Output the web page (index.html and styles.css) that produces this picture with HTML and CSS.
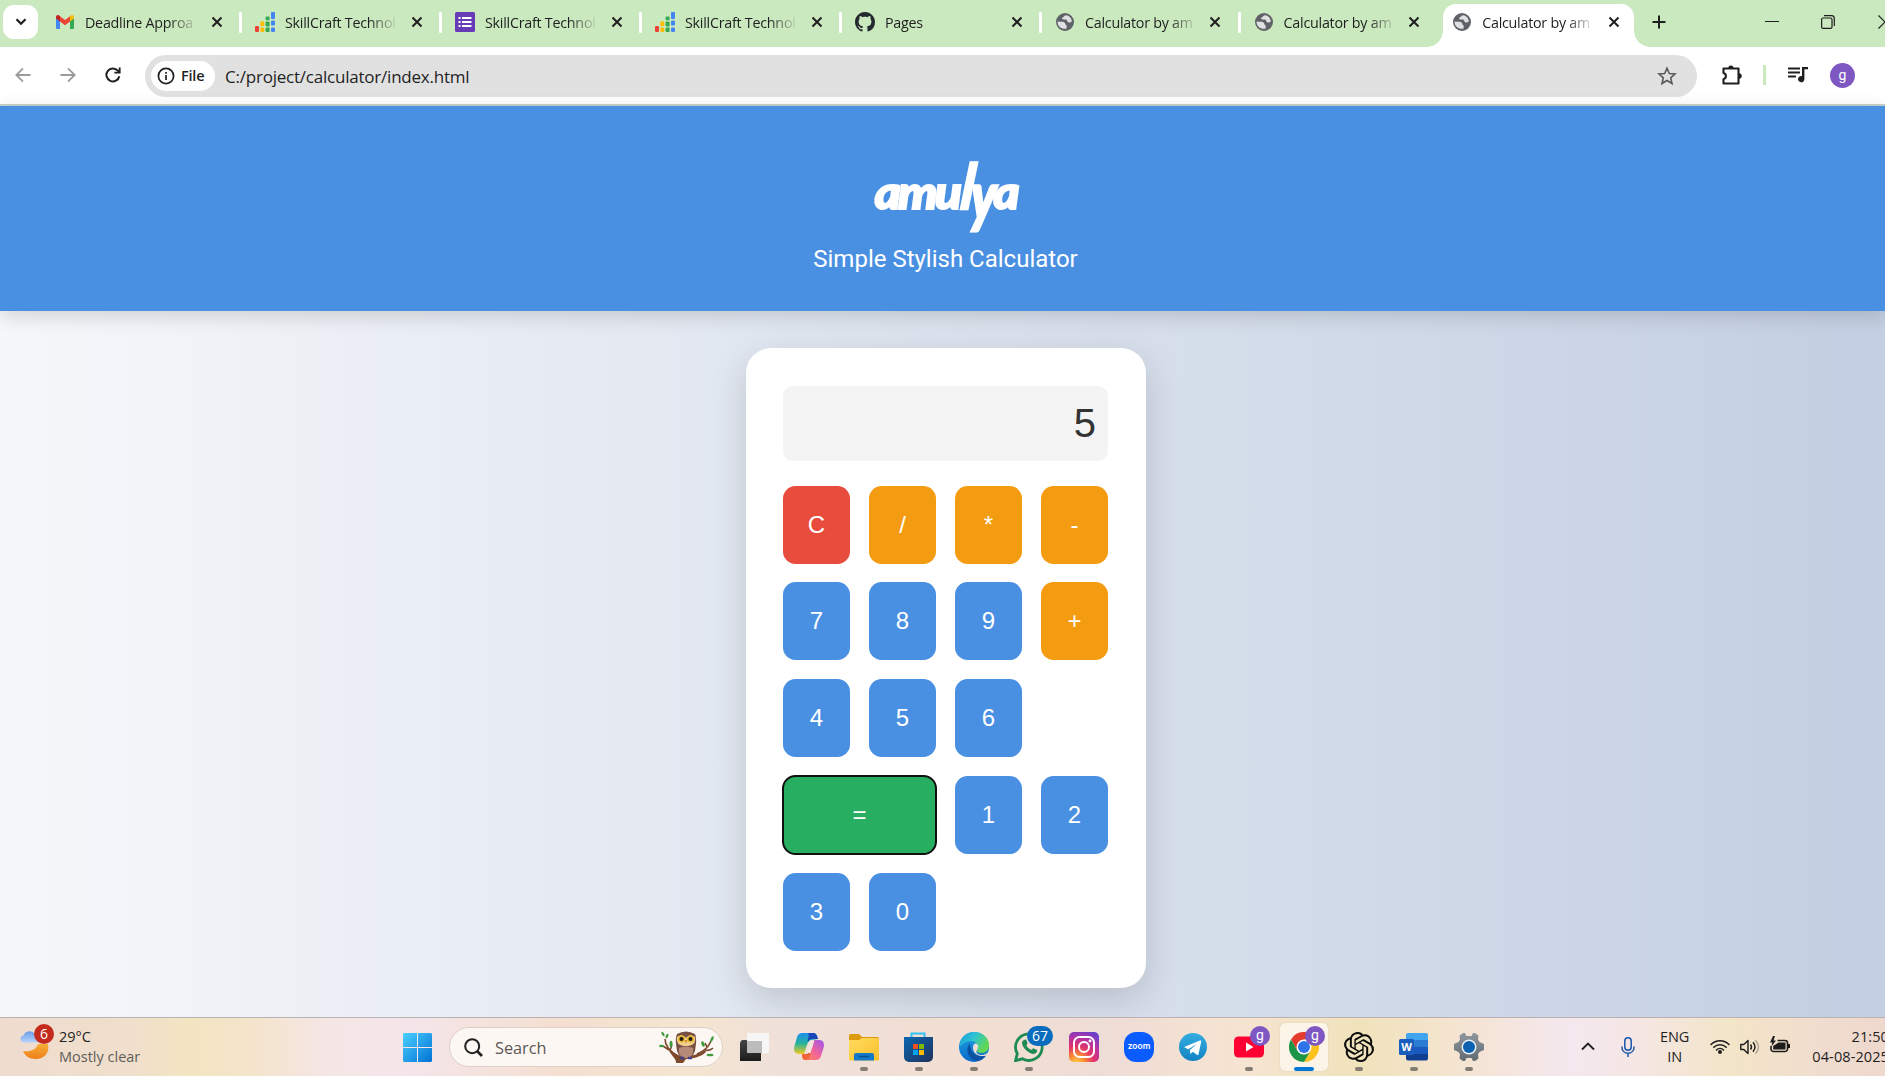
FILE: index.html
```html
<!DOCTYPE html>
<html lang="en">
<head>
<meta charset="utf-8">
<title>Calculator by amulya</title>
<link rel="stylesheet" href="styles.css">
</head>
<body>
<svg class="defs" aria-hidden="true">
  <defs>
    <linearGradient id="moon" x1="0" y1="0" x2="0" y2="1"><stop offset="0" stop-color="#f8ae38"/><stop offset="1" stop-color="#ee7f1a"/></linearGradient>
    <linearGradient id="cloud" x1="0" y1="0" x2="0" y2="1"><stop offset="0" stop-color="#6d9de8"/><stop offset="1" stop-color="#b5d3fa"/></linearGradient>
    <linearGradient id="win" x1="0" y1="0" x2="1" y2="1"><stop offset="0" stop-color="#4bd0ff"/><stop offset="1" stop-color="#0072d4"/></linearGradient>
    <linearGradient id="dark" x1="0" y1="0" x2="0" y2="1"><stop offset="0" stop-color="#444"/><stop offset="1" stop-color="#1c1c1c"/></linearGradient>
    <linearGradient id="copA" x1="0" y1="0" x2="0" y2="1"><stop offset="0" stop-color="#1b8df0"/><stop offset=".5" stop-color="#26b39a"/><stop offset="1" stop-color="#f2c81e"/></linearGradient>
    <linearGradient id="copB" x1="1" y1="0" x2="0" y2="1"><stop offset="0" stop-color="#9a56ee"/><stop offset=".5" stop-color="#f0649a"/><stop offset="1" stop-color="#ff8f4e"/></linearGradient>
    <linearGradient id="folder" x1="0" y1="0" x2="1" y2="1"><stop offset="0" stop-color="#ffdc5e"/><stop offset="1" stop-color="#fbbf2c"/></linearGradient>
    <linearGradient id="store" x1="0" y1="0" x2="1" y2="1"><stop offset="0" stop-color="#0a67b0"/><stop offset="1" stop-color="#20315c"/></linearGradient>
    <linearGradient id="edgeA" x1="0" y1="0" x2="1" y2=".5"><stop offset="0" stop-color="#1a9be0"/><stop offset=".5" stop-color="#2fc4d0"/><stop offset="1" stop-color="#62d84e"/></linearGradient>
    <linearGradient id="edgeB" x1="0" y1="0" x2="0" y2="1"><stop offset="0" stop-color="#1da5e6"/><stop offset="1" stop-color="#0a68c8"/></linearGradient>
    <radialGradient id="insta" cx=".25" cy="1.05" r="1.15"><stop offset="0" stop-color="#ffd24a"/><stop offset=".25" stop-color="#fb8a34"/><stop offset=".5" stop-color="#e2336b"/><stop offset=".75" stop-color="#b632a4"/><stop offset="1" stop-color="#6a3fc9"/></radialGradient>
    <linearGradient id="tele" x1="0" y1="0" x2="0" y2="1"><stop offset="0" stop-color="#34ade1"/><stop offset="1" stop-color="#1383c3"/></linearGradient>
    <linearGradient id="gear" x1="0" y1="0" x2="0" y2="1"><stop offset="0" stop-color="#8f979e"/><stop offset="1" stop-color="#626a72"/></linearGradient>
  </defs>
  <symbol id="i-close" viewBox="0 0 12 12"><path d="M1.5 1.5l9 9M10.5 1.5l-9 9" fill="none" stroke="#1f1f1f" stroke-width="2"/></symbol>
  <symbol id="i-gmail" viewBox="0 0 20 20"><path d="M1 5v11a1 1 0 0 0 1 1h3V8z" fill="#4285f4"/><path d="M19 5v11a1 1 0 0 1-1 1h-3V8z" fill="#34a853"/><path d="M15 4.2V9.5l4-3V5c0-2-2-2.6-3.200-1.500z" fill="#fbbc04"/><path d="M5 4.200l5 3.800 5-3.800v5.300l-5 3.700-5-3.700z" fill="#ea4335"/><path d="M1 5v1.500l4 3V4.200l-.8-.7C3 2.500 1 3.200 1 5z" fill="#c5221f"/></symbol>
  <symbol id="i-bars" viewBox="0 0 20 20"><rect x="0" y="14" width="4" height="6" rx="1" fill="#ea4335"/><g fill="#fbbc04"><rect x="5.300" y="9.500" width="4" height="4.500" rx="1"/><rect x="5.300" y="15.500" width="4" height="4.500" rx="1"/></g><g fill="#34a853"><rect x="10.600" y="4.500" width="4" height="3.800" rx="1"/><rect x="10.600" y="9.500" width="4" height="5" rx="1"/><rect x="10.600" y="15.500" width="4" height="4.500" rx="1"/></g><g fill="#4285f4"><rect x="16" y="0" width="4" height="7" rx="1"/><rect x="16" y="8.500" width="4" height="5" rx="1"/><rect x="16" y="15.500" width="4" height="4.500" rx="1"/></g></symbol>
  <symbol id="i-forms" viewBox="0 0 20 20"><rect width="20" height="20" rx="1.500" fill="#673ab7"/><path d="M3.500 6h2M3.500 10h2M3.500 14h2M7 6h9.500M7 10h9.500M7 14h9.500" stroke="#fff" stroke-width="2"/></symbol>
  <symbol id="i-github" viewBox="0 0 16 16"><path fill="#24292f" d="M8 0C3.580 0 0 3.580 0 8c0 3.540 2.290 6.530 5.470 7.590.4.070.55-.17.55-.38 0-.19-.01-.82-.01-1.490-2.010.37-2.530-.49-2.690-.94-.09-.23-.48-.94-.82-1.130-.28-.15-.68-.52-.01-.53.63-.01 1.080.58 1.230.82.72 1.210 1.870.87 2.330.66.070-.52.28-.87.51-1.070-1.780-.2-3.640-.89-3.640-3.950 0-.87.31-1.590.82-2.150-.08-.2-.36-1.020.08-2.120 0 0 .67-.21 2.200.82.64-.18 1.320-.27 2-.27s1.360.09 2 .27c1.530-1.040 2.200-.82 2.200-.82.44 1.100.16 1.920.08 2.120.51.56.82 1.270.82 2.150 0 3.070-1.870 3.750-3.650 3.950.29.25.54.73.54 1.480 0 1.070-.01 1.930-.01 2.200 0 .21.15.46.55.38A8.010 8.010 0 0 0 16 8c0-4.420-3.580-8-8-8z"/></symbol>
  <symbol id="i-globe" viewBox="0 0 20 20"><circle cx="10" cy="10" r="9" fill="#5f6368"/><path d="M2.600 9.500c1.500.2 3 .2 4.800.2 1.900 0 2.800 1 2.900 2.300.1 1 1.300.8 1.400 2l-.2 2.800C6 17.300 2.400 14.200 2.600 9.500zM10.800 3.300c-1.700.3-1.800 1.700-3 2.100-1 .3-1 1.500.1 1.900 1.600.5 2.200-.4 3.600.5 1.200.8.5 2.100 1.700 2.500 1.400.6 2.700.1 3.600-.8C16.500 6 14.300 3.600 10.800 3.300z" fill="#fff" opacity=".8"/></symbol>
</svg>

<div class="tabstrip">
  <button class="tab-search"><svg width="12" height="8" viewBox="0 0 12 8"><path d="M1.500 1.200L6 5.800l4.500-4.600" fill="none" stroke="#1f1f1f" stroke-width="2.200"/></svg></button>
  <div class="tab"><svg class="fav"><use href="#i-gmail"/></svg><span class="title">Deadline Approa</span><svg class="x"><use href="#i-close"/></svg></div>
  <div class="tab"><svg class="fav"><use href="#i-bars"/></svg><span class="title">SkillCraft Technol</span><svg class="x"><use href="#i-close"/></svg></div>
  <div class="tab"><svg class="fav"><use href="#i-forms"/></svg><span class="title">SkillCraft Technol</span><svg class="x"><use href="#i-close"/></svg></div>
  <div class="tab"><svg class="fav"><use href="#i-bars"/></svg><span class="title">SkillCraft Technol</span><svg class="x"><use href="#i-close"/></svg></div>
  <div class="tab"><svg class="fav"><use href="#i-github"/></svg><span class="title">Pages</span><svg class="x"><use href="#i-close"/></svg></div>
  <div class="tab narrow"><svg class="fav"><use href="#i-globe"/></svg><span class="title">Calculator by am</span><svg class="x"><use href="#i-close"/></svg></div>
  <div class="tab narrow last"><svg class="fav"><use href="#i-globe"/></svg><span class="title">Calculator by am</span><svg class="x"><use href="#i-close"/></svg></div>
  <div class="tab active"><svg class="fav"><use href="#i-globe"/></svg><span class="title">Calculator by am</span><svg class="x"><use href="#i-close"/></svg></div>
  <svg class="new-tab" width="14" height="14" viewBox="0 0 14 14"><path d="M7 .5v13M.5 7h13" stroke="#1f1f1f" stroke-width="2"/></svg>
  <div class="window-controls">
    <svg width="14" height="14" viewBox="0 0 14 14"><path d="M0 6.500h14" stroke="#1f1f1f"/></svg>
    <svg width="14" height="14" viewBox="0 0 14 14" fill="none" stroke="#1f1f1f" stroke-width="1.200"><rect x=".6" y="3" width="10.400" height="10.400" rx="1.500"/><path d="M3 .7h7.500a2.800 2.800 0 0 1 2.800 2.800V11"/></svg>
    <svg width="14" height="14" viewBox="0 0 14 14"><path d="M.5 .5l13 13M13.500 .5l-13 13" stroke="#1f1f1f" stroke-width="1.200"/></svg>
  </div>
</div>

<div class="toolbar">
  <div class="nav">
    <svg width="16" height="16" viewBox="0 0 16 16" fill="none" stroke="#9b9b9b" stroke-width="1.800"><path d="M15.500 8H1.500M8 1.300L1.300 8 8 14.700"/></svg>
    <svg width="16" height="16" viewBox="0 0 16 16" fill="none" stroke="#9b9b9b" stroke-width="1.800"><path d="M.5 8h14M8 1.300L14.700 8 8 14.700"/></svg>
    <svg width="16" height="16" viewBox="0 0 16 16"><path d="M14.300 9.200A6.500 6.500 0 1 1 12.800 3.600L14.500 5.300" fill="none" stroke="#1f1f1f" stroke-width="2"/><path d="M15.600.4v6.100H9.400V4.700h4.300V.4z" fill="#1f1f1f"/></svg>
  </div>
  <div class="omnibox">
    <div class="chip"><svg width="18" height="18" viewBox="0 0 18 18"><circle cx="9" cy="9" r="7.600" fill="none" stroke="#1f1f1f" stroke-width="1.700"/><path d="M9 8v5M9 5v1.700" stroke="#1f1f1f" stroke-width="1.700"/></svg><span>File</span></div>
    <span class="url">C:/project/calculator/index.html</span>
    <svg class="star" width="20" height="20" viewBox="0 0 20 20"><path d="M10 2.200l2.300 5.300 5.700.5-4.300 3.800 1.300 5.700-5-3-5 3 1.300-5.700L2 8l5.700-.5z" fill="none" stroke="#5a5a5a" stroke-width="1.600"/></svg>
  </div>
  <svg class="puzzle" width="22" height="22" viewBox="0 0 22 22"><path d="M2.500 4.500h15v15h-15v-4.300a3.200 3.200 0 0 0 0-6.200z" fill="none" stroke="#1f1f1f" stroke-width="2.100" stroke-linejoin="round"/><path d="M7.300 4a2.600 2.600 0 0 1 5.200 0zM18 9.300a2.700 2.700 0 0 1 0 5.400z" fill="#1f1f1f"/></svg>
  <span class="bar-sep"></span>
  <svg class="music" width="20" height="16" viewBox="0 0 20 16"><path d="M0 1.500h12M0 5.500h12M0 9.500h8" stroke="#1f1f1f" stroke-width="2"/><path d="M14 0h6v2.300h-3.600V12a3.200 3.200 0 1 1-2.400-3z" fill="#1f1f1f"/></svg>
  <span class="avatar">g</span>
</div>

<main class="page">
  <header class="hero">
    <h1 class="brand">amu<span class="tall">l</span><span class="tail">y</span>a</h1>
    <p class="tagline">Simple Stylish Calculator</p>
  </header>
  <section class="calculator">
    <div class="display">5</div>
    <div class="keys">
      <button class="key clear">C</button><button class="key op">/</button><button class="key op">*</button><button class="key op">-</button>
      <button class="key">7</button><button class="key">8</button><button class="key">9</button><button class="key op">+</button>
      <button class="key">4</button><button class="key">5</button><button class="key">6</button>
      <button class="key equals">=</button><button class="key">1</button><button class="key">2</button>
      <button class="key">3</button><button class="key">0</button>
    </div>
  </section>
</main>

<footer class="taskbar">
  <div class="weather">
    <span class="weather-icon"><svg width="32" height="32" viewBox="0 0 32 32"><path d="M4 11.500a3.600 3.600 0 0 1 .5-7A6.500 6.500 0 0 1 16 3c5 0 6 8.500 1 8.500z" fill="url(#cloud)"/><path d="M4 20c7 1 13-1 15-7h10c2 9-4 15-12.500 15-6 0-10.500-3-12.500-8z" fill="url(#moon)"/></svg><span class="badge red">6</span></span>
    <span class="weather-text"><span>29°C</span><span class="muted">Mostly clear</span></span>
  </div>
  <div class="center">
    <svg class="start" width="29" height="29" viewBox="0 0 29 29"><path d="M1 0h13v14H0V1zM15 0h13l1 1v13H15zM0 15h14v14H1l-1-1zM15 15h14v13l-1 1H15z" fill="url(#win)"/></svg>
    <div class="search">
      <svg width="19" height="19" viewBox="0 0 19 19" fill="none" stroke="#202020" stroke-width="2"><circle cx="8.200" cy="8.200" r="7"/><path d="M13 13l5 5" stroke-width="2.600"/></svg>
      <span>Search</span>
      <svg class="owl" width="56" height="34" viewBox="0 0 56 34"><path d="M6 9c0 8 6 13 13 17M52 11c-2 5-6 10-14 13M46 20c4 1 6 0 8-2M11 20c2-3 2-5 1-8M48 17l-2-4M10 20l-6-4" fill="none" stroke="#7d4a2d" stroke-width="1.600"/><path d="M9 18c4 4 8 7 14 8 9 0 16-1 23-6l1 2c-5 5-13 6.500-20 7l-3 4h-7c1-4-6-8-8-15z" fill="#7d4a2d"/><g fill="#3f9b3c"><ellipse cx="4" cy="4" rx="1.200" ry="2.500" transform="rotate(-30 4 4)"/><ellipse cx="12" cy="14" rx="1.500" ry="3.200"/><ellipse cx="2.500" cy="16" rx="2.500" ry="1.300"/><ellipse cx="8" cy="6" rx="1.200" ry="2.500" transform="rotate(25 8 6)"/><ellipse cx="44" cy="14" rx="1.500" ry="3" transform="rotate(-25 44 14)"/><ellipse cx="53" cy="9" rx="1.300" ry="3" transform="rotate(25 53 9)"/><ellipse cx="51" cy="25" rx="3.500" ry="1.300"/></g><path d="M18 4q9-5 18 0c2 5 1 10 0 17q-3 8-9 8t-9-8c-1-7-2-12 0-17z" fill="#77503f"/><path d="M18 7c4-3 7-2 9 1 2-3 5-4 9-1 1 7-3 9-9 9s-10-2-9-9z" fill="#f0cf91"/><circle cx="22.500" cy="9" r="3.500" fill="#e8b72c"/><circle cx="31.500" cy="9" r="3.500" fill="#e8b72c"/><circle cx="22.500" cy="9" r="2" fill="#201a18"/><circle cx="31.500" cy="9" r="2" fill="#201a18"/><path d="M25.800 10h2.400L27 14z" fill="#d08a1d"/><path d="M20 18q7-3 14 0c1 6-2 10-7 10s-8-4-7-10z" fill="#b58b77"/><path d="M21 28h4M29 28h4" stroke="#42418b" stroke-width="2.500"/></svg>
    </div>
    <div class="apps">
      <span class="app"><svg viewBox="0 0 30 30"><path d="M8 8h14v21H1V12c0-2 1-4 3-4z" fill="url(#dark)"/><rect x="8" y="1" width="22" height="20" rx="1" fill="#f6f6f6"/><path d="M8 9h15v12H8z" fill="#bcbcbc"/></svg></span>
      <span class="app"><svg viewBox="0 0 30 30"><path d="M8 1h11c3 0 4 2 5 6l-6 1c-3 0-4 2-5 5l-3 9H5c-4 0-6-3-4.500-8L3 5c1-3 3-4 5-4z" fill="url(#copA)"/><path d="M14 1h5c3 0 4 2 5 6h-6c-2 0-3 1-4 3-1-4 2-5 0-9z" fill="#1b48b8"/><path d="M22 28H12c-3 0-4-2-4-6h4c3 0 4-2 5-5l3-9h5c4 0 6 3 4.500 8L27 24c-1 3-3 4-5 4z" fill="url(#copB)"/><path d="M8 22h4c2 0 4-2 5-4-1 5-1 10-5 10-3 0-4-2-4-6z" fill="#f2663d"/><path d="M17 8.500h3.500l-4 12.500H12.500z" fill="#f3e4df"/></svg></span>
      <span class="app run"><svg viewBox="0 0 30 30"><path d="M0 8V4c0-1.500 1-2 2-2h8l3 3h15c1 0 2 .8 2 2v4z" fill="#dc9a0c"/><path d="M0 8h10l3-2h15a2 2 0 0 1 2 2v20.500H0z" fill="url(#folder)"/><path d="M5 28.500V23a2 2 0 0 1 2-2h16a2 2 0 0 1 2 2v5.500z" fill="#1279c9"/><path d="M10 24.500h10" stroke="#0a4f8d" stroke-width="1.500"/></svg></span>
      <span class="app run store"><svg viewBox="0 0 30 30"><path d="M8.500 7V1.500h13V7" fill="none" stroke="#2fc0f4" stroke-width="2"/><path d="M1 5h29v20a5 5 0 0 1-5 5H6a5 5 0 0 1-5-5z" fill="url(#store)"/><path d="M10 12h5v5h-5z" fill="#f25022"/><path d="M16 12h5v5h-5z" fill="#7fba00"/><path d="M10 18h5v5h-5z" fill="#00a4ef"/><path d="M16 18h5v5h-5z" fill="#ffb900"/></svg></span>
      <span class="app run"><svg viewBox="0 0 30 30"><circle cx="15" cy="15" r="15" fill="url(#edgeB)"/><path d="M1 11C3 4 9 0 15 0c9 0 15 6 15 13 0 5-3 8-7 8-3 0-6-1-5-3 3-5-1-9-6-9-5 0-9 3-11 6z" fill="url(#edgeA)"/><path d="M11 11c-4 4-4 13 4 17 5 2 9-1 12-5-7 3-16 0-16-12z" fill="#0c51a2"/><path d="M18 18c-2 3 1 5 5 5 3 0 6-2 7-4l1 3-3 1.500c-7 2-14-1-14-8 0-2 1-4 2.500-4 3 0 3.500 4 1.500 6.500z" fill="#f0ddd3"/></svg></span>
      <span class="app run"><svg viewBox="0 0 30 30"><path d="M1.500 28.700l1.800-7A13.300 13.300 0 1 1 8.500 26.800z" fill="none" stroke="#1f8b54" stroke-width="2.800"/><path d="M10 8c1-1 2-.5 2.500.5l1 2.500c.3 1-1.300 2-1 2.600 1 2 2.600 3.400 4.600 4.200.8.300 1.800-1.800 2.700-1.400l2.800 1.400c2 1-1 4.200-3 4.200-4 0-12-6-11.600-11.500 0-1 1-2 2-2.500z" fill="#1f8b54"/></svg><span class="badge blue">67</span></span>
      <span class="app"><svg viewBox="0 0 30 30"><rect width="30" height="30" rx="5" fill="url(#insta)"/><rect x="5" y="5" width="20" height="20" rx="5.500" fill="none" stroke="#fff" stroke-width="2"/><circle cx="15" cy="15" r="5" fill="none" stroke="#fff" stroke-width="2"/><circle cx="21" cy="9" r="1.400" fill="#fff"/></svg></span>
      <span class="app zoom"><span>zoom</span></span>
      <span class="app tele"><svg viewBox="0 0 30 30"><circle cx="15" cy="15" r="14" fill="url(#tele)"/><path d="M6 15l16-6.500c1-.3 1.500 0 1.200 1.200l-2.700 12.500c-.2 1-.8 1-1.600.5l-4-3-2.500 2.300-.5-4 7-6-8.700 5.300z" fill="#fff"/></svg></span>
      <span class="app run"><svg viewBox="0 0 30 30"><rect y="4.500" width="30" height="21" rx="4.500" fill="#ff0033"/><path d="M12 10.500v9l7.500-4.500z" fill="#fff"/></svg><span class="badge purple">g</span></span>
      <span class="app run current"><svg viewBox="0 0 30 30"><path d="M2 7.500A15 15 0 0 1 28 7.500H15L8.500 18.700z" fill="#e33b2e"/><path d="M28 7.500A15 15 0 0 1 15 30l6.500-11.200L21.500 8z" fill="#fcc31e"/><path d="M2 7.500l6.500 11.300c3 4.500 9 4.500 13 0L15 30A15 15 0 0 1 2 7.500z" fill="#1c9548"/><circle cx="15" cy="15" r="7.500" fill="#fff"/><circle cx="15" cy="15" r="6" fill="#2f74e8"/></svg><span class="badge purple">g</span></span>
      <span class="app run"><svg viewBox="0 0 24 24"><path fill="#0b0b0b" d="M22.282 9.821a5.985 5.985 0 0 0-.516-4.910 6.046 6.046 0 0 0-6.510-2.900A6.065 6.065 0 0 0 4.981 4.182a5.985 5.985 0 0 0-3.998 2.900 6.046 6.046 0 0 0 .743 7.097 5.980 5.980 0 0 0 .511 4.911 6.051 6.051 0 0 0 6.515 2.900A5.985 5.985 0 0 0 13.260 24a6.056 6.056 0 0 0 5.772-4.206 5.990 5.990 0 0 0 3.998-2.900 6.056 6.056 0 0 0-.748-7.073zM13.260 22.430a4.476 4.476 0 0 1-2.876-1.040l.141-.081 4.779-2.758a.795.795 0 0 0 .393-.681v-6.737l2.020 1.169a.071.071 0 0 1 .038.052v5.583a4.504 4.504 0 0 1-4.495 4.493zM3.600 18.304a4.471 4.471 0 0 1-.535-3.014l.142.085 4.783 2.759a.771.771 0 0 0 .780 0l5.843-3.369v2.332a.080.080 0 0 1-.033.062L9.740 19.950a4.499 4.499 0 0 1-6.140-1.646zM2.341 7.896a4.485 4.485 0 0 1 2.365-1.973V11.600a.766.766 0 0 0 .388.677l5.815 3.354-2.020 1.169a.076.076 0 0 1-.071 0l-4.830-2.787A4.504 4.504 0 0 1 2.341 7.872zm16.597 3.855l-5.833-3.388L15.119 7.200a.076.076 0 0 1 .071 0l4.830 2.791a4.494 4.494 0 0 1-.676 8.105v-5.678a.790.790 0 0 0-.407-.667zm2.010-3.023l-.141-.085-4.774-2.782a.776.776 0 0 0-.785 0L9.409 9.230V6.897a.066.066 0 0 1 .028-.061l4.830-2.787a4.499 4.499 0 0 1 6.680 4.660zm-12.640 4.135l-2.020-1.164a.080.080 0 0 1-.038-.057V6.075a4.499 4.499 0 0 1 7.375-3.453l-.142.080L8.704 5.460a.795.795 0 0 0-.393.681zm1.097-2.365l2.602-1.500 2.607 1.500v2.999l-2.597 1.500-2.607-1.500z"/></svg></span>
      <span class="app run"><svg viewBox="0 0 30 30"><path d="M7 3a2 2 0 0 1 2-2h18a2 2 0 0 1 2 2v5H7z" fill="#41a5ee"/><path d="M7 8h22v7H7z" fill="#2b7cd3"/><path d="M7 15h22v7H7z" fill="#185abd"/><path d="M7 22h22v4.500a2 2 0 0 1-2 2H9a2 2 0 0 1-2-2z" fill="#103f91"/><rect y="7" width="15" height="16" rx="1.500" fill="#1a5dbe"/></svg><span class="word">W</span></span>
      <span class="app run"><svg viewBox="0 0 30 30"><path d="M5.500 3.500L9 1h2l1.500 3h5L19 1h2l3.500 2.500L24 7.700l1.500 2.300 4.500 2v6l-4.500 2-1.500 2.300.5 4.200L21 29h-2l-1.500-3h-5L11 29H9l-3.500-2.500.5-4.200L4.500 20 0 18v-6l4.500-2L6 7.700z" fill="url(#gear)"/><circle cx="15" cy="15" r="7.500" fill="#e9f1f8"/><circle cx="15" cy="15" r="6" fill="#0c62b0"/></svg></span>
    </div>
  </div>
  <div class="tray">
    <svg class="chev" width="14" height="9" viewBox="0 0 14 9"><path d="M1 7.500l6-6 6 6" fill="none" stroke="#222" stroke-width="1.900"/></svg>
    <svg class="mic" width="14" height="20" viewBox="0 0 14 20" fill="none" stroke="#1b56ad" stroke-width="1.500"><rect x="3.800" y=".8" width="6.400" height="12.400" rx="3.200"/><path d="M.8 9.500c0 9 12.400 9 12.400 0M7 16.300V20"/></svg>
    <span class="lang"><span>ENG</span><span>IN</span></span>
    <svg class="wifi" width="20" height="15" viewBox="0 0 20 15" fill="none" stroke="#1c1c1c" stroke-width="1.500" stroke-linecap="round"><path d="M1 5.500a12.500 12.500 0 0 1 18 0M3.800 8.300a8.700 8.700 0 0 1 12.400 0M6.500 11a5 5 0 0 1 7 0"/><circle cx="10" cy="13" r="1.200" fill="#1c1c1c"/></svg>
    <svg class="vol" width="20" height="16" viewBox="0 0 20 16" fill="none" stroke="#1c1c1c" stroke-width="1.400" stroke-linejoin="round"><path d="M.8 5.500h3L8 1.500v13l-4.200-4h-3zM10.500 5.500q2 2.500 0 5M13 3.300q4 4.700 0 9.400"/><path d="M15.500 1.300q6 6.700 0 13.400" opacity=".3"/></svg>
    <svg class="bat" width="20" height="17" viewBox="0 0 20 17"><path d="M7.500 4.500H15a2.500 2.500 0 0 1 2.500 2.500v6a2.500 2.500 0 0 1-2.500 2.500H3.500A2.500 2.500 0 0 1 1 13v-3" fill="none" stroke="#1c1c1c" stroke-width="1.600"/><path d="M8.500 6.500h7v7H3.200V10z" fill="#1c1c1c"/><rect x="18" y="8" width="2" height="4" fill="#1c1c1c"/><path d="M3 0L0 6.500h2.300L1.500 10.500 6 4.500H3.500L5 0z" fill="#1c1c1c"/></svg>
    <span class="clock"><span>21:50</span><span>04-08-2025</span></span>
  </div>
</footer>
</body>
</html>
```
FILE: styles.css
```css
* { box-sizing: border-box; }
html, body { height: 100%; }
body {
  margin: 0;
  width: 1885px;
  height: 1076px;
  overflow: hidden;
  display: flex;
  flex-direction: column;
  font-family: "Open Sans", "Noto Sans", sans-serif;
  color: #1f1f1f;
}
button { border: 0; padding: 0; font: inherit; }
svg { display: block; flex: none; }
.defs { position: absolute; width: 0; height: 0; }

/* Tab strip */
.tabstrip {
  height: 47px;
  flex: none;
  display: flex;
  align-items: flex-start;
  background: #cbe9bf;
  padding-left: 3px;
}
.tab-search {
  width: 35px;
  height: 34px;
  flex: none;
  margin: 5px 4px 0 0;
  border-radius: 11px;
  background: #fff;
  display: flex;
  align-items: center;
  justify-content: center;
}
.tab {
  width: 200px;
  height: 44px;
  flex: none;
  position: relative;
  display: flex;
  align-items: center;
  padding-left: 13px;
}
.tab.narrow { width: 198.6px; }
.tab::after {
  content: "";
  width: 3px;
  height: 21px;
  background: #fff;
  border-radius: 1px;
  margin-left: 16.5px;
}
.tab.last::after, .tab.active::after { background: none; }
.fav { width: 20px; height: 20px; margin-right: 10px; }
.title {
  width: 113px;
  font-size: 14.3px;
  letter-spacing: -0.25px;
  white-space: nowrap;
  mask-image: linear-gradient(to right, #000 84px, transparent 113px);
}
.x { width: 12px; height: 12px; margin-left: 14px; }
.tab.active { z-index: 0; width: 199.6px; }
.tab.active .x { margin-left: 13px; }
.tab.active::before {
  content: "";
  position: absolute;
  z-index: -1;
  left: 4px;
  top: 4px;
  width: 191px;
  height: 43px;
  background: #fff;
  border-radius: 13px 13px 0 0;
}
.tab.active::after {
  position: absolute;
  z-index: -1;
  left: -12px;
  bottom: -3px;
  width: 223px;
  height: 16px;
  margin: 0;
  border-radius: 0;
  background:
    radial-gradient(circle at 0 0, transparent 15.5px, #fff 16px) left / 16px 16px no-repeat,
    radial-gradient(circle at 100% 0, transparent 15.5px, #fff 16px) right / 16px 16px no-repeat;
}
.new-tab { margin: 15px 0 0 13px; }
.window-controls { display: flex; gap: 42.5px; margin: 15px 0 0 99px; }

/* Toolbar */
.toolbar {
  height: 59px;
  flex: none;
  display: flex;
  align-items: center;
  padding: 0 0 2px 15px;
  background: #fff;
  border-bottom: 2px solid #c8d2cc;
}
.nav { display: flex; gap: 29px; width: 130px; }
.omnibox {
  width: 1552px;
  height: 42px;
  margin-top: 2px;
  border-radius: 21px;
  background: #e1e1e1;
  display: flex;
  align-items: center;
  padding: 0 20px 0 6px;
}
.chip {
  width: 64px;
  height: 30px;
  border-radius: 15px;
  background: #fff;
  display: flex;
  align-items: center;
  gap: 6px;
  padding-left: 6px;
  font-size: 14.5px;
  font-weight: 600;
  letter-spacing: -0.2px;
}
.url { margin: 2px 0 0 10px; font-size: 17px; letter-spacing: -0.22px; white-space: nowrap; }
.star { margin-left: auto; }
.puzzle { margin-left: 24px; }
.bar-sep { width: 3px; height: 20px; background: #cbe9bf; margin-left: 20px; }
.music { margin-left: 22px; }
.avatar {
  width: 25px;
  height: 25px;
  border-radius: 50%;
  background: #7e57c2;
  color: #fff;
  font: 14px/24px Roboto, sans-serif;
  text-align: center;
  margin: 1px 0 0 22px;
}

/* Calculator page */
.page {
  flex: 1;
  min-height: 0;
  background: linear-gradient(to right, #f5f7fa, #c3cfe2);
  display: flex;
  flex-direction: column;
  align-items: center;
}
.hero {
  align-self: stretch;
  height: 205px;
  flex: none;
  background: #4a90e2;
  color: #fff;
  box-shadow: 0 5px 19px rgba(0, 0, 0, 0.15);
  display: flex;
  flex-direction: column;
  align-items: center;
  padding: 38px 0 0 6px;
}
.brand {
  margin: 0;
  font: italic 900 46px/96px Lato, sans-serif;
  letter-spacing: -2.6px;
  -webkit-text-stroke: 2px #fff;
  height: 94px;
  display: flex;
  transform: scaleX(1.08);
}
.tall { transform: scaleY(1.35) skewX(-8deg); transform-origin: 50% 64px; margin: 0 2px 0 1px; }
.tail { transform: scaleY(1.45) skewX(-4deg); transform-origin: 50% 40px; }
.tagline { margin: 6px 0 0; font: 24px/30px Roboto, sans-serif; }
.calculator {
  width: 400px;
  height: 640px;
  flex: none;
  margin: 37px 0 0 7px;
  padding: 38px 38px 0 37px;
  border-radius: 25px;
  background: #fff;
  box-shadow: 0 12px 37px rgba(0, 0, 0, 0.15);
  font-family: "Liberation Sans", Arial, sans-serif;
}
.display {
  height: 75px;
  border-radius: 10px;
  background: #f4f4f4;
  color: #333;
  font-size: 40px;
  line-height: 74px;
  text-align: right;
  padding-right: 12px;
}
.keys {
  margin-top: 24.6px;
  display: grid;
  grid-template-columns: repeat(4, 67px);
  grid-auto-rows: 78px;
  gap: 18.75px 19px;
}
.key {
  border-radius: 12.5px;
  background: #4a90e2;
  color: #fff;
  font-size: 24px;
}
.op { background: #f39c12; }
.clear { background: #e74c3c; }
.equals {
  grid-column: 1 / span 2;
  background: #27ae60;
  outline: 2px solid #101010;
  outline-offset: -1px;
}

/* Taskbar */
.taskbar {
  height: 59px;
  flex: none;
  display: flex;
  border-top: 1px solid #b9b1b2;
  background: linear-gradient(to right, #efdccf 0, #f0dfcc 130px, #f3e5c1 190px, #f4e4cb 250px, #f5e6e6 330px, #f5e5ea 410px, #f4dfd0 560px, #f5e5d0 690px, #efe0da 780px, #f3dfd2 980px, #eedcd6 1100px, #f6e4d2 1240px, #f0e3bb 1360px, #f5e4d6 1480px, #f4e8ef 1570px, #f5e6e3 1640px, #f3e5c8 1730px, #f0dccf 1830px, #efd8cd 1885px);
}
.weather { display: flex; flex: none; width: 403px; padding-left: 19px; }
.weather-icon { position: relative; width: 40px; padding-top: 13px; }
.weather-text, .lang, .clock { display: flex; flex-direction: column; font-size: 14.5px; line-height: 20px; padding-top: 9px; white-space: nowrap; }
.muted { color: #605c58; }
.badge {
  position: absolute;
  height: 20px;
  min-width: 20px;
  border-radius: 10px;
  color: #fff;
  font-size: 14px;
  line-height: 19px;
  text-align: center;
}
.badge.red { left: 15px; top: 6px; background: #c42b1c; }
.badge.blue { left: 13px; top: -6px; width: 26px; background: #0a6cbd; }
.badge.purple { left: 16px; top: -6px; background: #7e57c2; font-family: Roboto, sans-serif; }
.center { display: flex; flex: none; align-items: flex-start; }
.start { margin-top: 15px; }
.search {
  width: 274px;
  height: 40px;
  margin: 9px 0 0 17px;
  border: 1px solid #dfcfc8;
  border-radius: 20px;
  background: #fcf7f3;
  display: flex;
  align-items: center;
  padding-left: 14px;
  gap: 12px;
  font-size: 16.3px;
  color: #5c5856;
}
.search span { padding-top: 1px; }
.owl { margin-left: auto; margin-right: 7px; }
.apps { display: flex; gap: 25px; margin: 14px 0 0 16px; }
.app { position: relative; width: 30px; height: 30px; z-index: 0; }
.app > svg { width: 30px; height: 30px; }
.store > svg, .tele > svg { margin-left: -1px; }
.run::after {
  content: "";
  position: absolute;
  left: 11px;
  top: 35px;
  width: 8px;
  height: 4px;
  border-radius: 2px;
  background: #857c74;
}
.current::before {
  content: "";
  position: absolute;
  z-index: -1;
  left: -9px;
  top: -9px;
  width: 48px;
  height: 48px;
  border-radius: 5px;
  background: #fbf4e7;
  box-shadow: 0 0 1px rgba(0, 0, 0, 0.25);
}
.run.current::after { left: 5px; width: 20px; background: #0078d4; }
.zoom {
  border-radius: 12px;
  background: #0b5cff;
  color: #fff;
  font: 600 8.5px/28px Inter, sans-serif;
  text-align: center;
}
.word {
  position: absolute;
  left: 0;
  top: 7px;
  width: 15px;
  font: 700 11px/16px "Open Sans", sans-serif;
  text-align: center;
  color: #fff;
}
.tray { display: flex; align-items: flex-start; width: 308px; margin-left: 97px; flex: none; }
.chev { margin: 24px 0 0 0; }
.mic { margin: 19px 0 0 26px; }
.lang { width: 40px; margin-left: 22px; align-items: center; }
.wifi { margin: 21px 0 0 18px; }
.vol { margin: 21px 0 0 10px; }
.bat { margin: 18px 0 0 10px; }
.clock { margin-left: 22px; width: 80px; align-items: flex-end; letter-spacing: 0.1px; }
```
